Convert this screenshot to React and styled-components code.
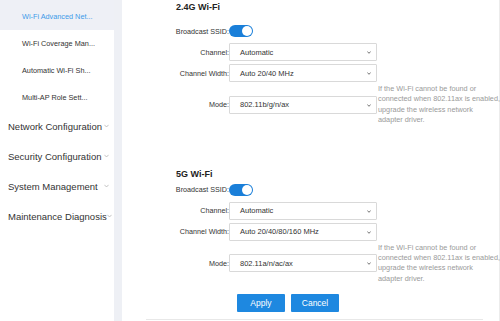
import React from 'react';
import styled, { createGlobalStyle } from 'styled-components';

const GlobalStyle = createGlobalStyle`
  html, body {
    margin: 0;
    padding: 0;
    background: #ffffff;
    font-family: "Liberation Sans", Arial, sans-serif;
    color: #333;
  }
`;

const Page = styled.div`
  display: flex;
  width: 500px;
  height: 321px;
  overflow: hidden;
`;

const Sidebar = styled.div`
  width: 114px;
  flex-shrink: 0;
  background: #fff;
`;

const Gutter = styled.div`
  width: 8px;
  flex-shrink: 0;
  background: #eef0f5;
`;

const SubItem = styled.div`
  height: ${(p) => (p.active ? '30px' : '27px')};
  padding-top: ${(p) => (p.active ? '3px' : '0')};
  box-sizing: border-box;
  display: flex;
  align-items: center;
  padding-left: 22px;
  font-size: 7.3px;
  color: ${(p) => (p.active ? '#3d9be9' : '#333')};
  background: ${(p) => (p.active ? '#eef0f6' : 'transparent')};
  white-space: nowrap;
`;

const GroupRow = styled.div`
  height: 30px;
  display: flex;
  align-items: center;
  padding-left: 8px;
  padding-right: 5px;
  font-size: 9.5px;
  color: #333;
  white-space: nowrap;
`;

const GroupLabel = styled.span`
  flex: 1;
`;

const Chevron = styled.svg`
  width: 5px;
  height: 4px;
  flex-shrink: 0;
`;

const Main = styled.div`
  flex: 1;
  border-right: 1px solid #ececec;
  padding-left: 24px;
`;

const Card = styled.div`
  width: 337px;
  padding-bottom: 7px;
  border-bottom: 1px solid #e8e8e8;
`;

const Title = styled.div`
  padding-left: 30px;
  font-size: 9px;
  font-weight: bold;
  color: #222;
  line-height: 14px;
  margin-top: ${(p) => p.top}px;
  margin-bottom: ${(p) => p.bottom}px;
`;

const Row = styled.div`
  display: grid;
  grid-template-columns: 83px 148px 130px;
  align-items: center;
  min-height: 18px;
  margin-top: ${(p) => p.top ?? 3}px;
`;

const Label = styled.div`
  text-align: right;
  font-size: 7.2px;
  color: #333;
  white-space: nowrap;
`;

const Toggle = styled.div`
  width: 24px;
  height: 12px;
  border-radius: 6px;
  background: #1a7fd9;
  position: relative;
`;

const Knob = styled.div`
  position: absolute;
  right: 1px;
  top: 1px;
  width: 10px;
  height: 10px;
  border-radius: 50%;
  background: #fff;
`;

const SelectBox = styled.div`
  position: relative;
  height: 18px;
  box-sizing: border-box;
  border: 1px solid #d9d9d9;
  border-radius: 1px;
  display: flex;
  align-items: center;
  padding-left: 10px;
  font-size: 7.5px;
  color: #333;
  background: #fff;
`;

const SelectArrow = styled.svg`
  position: absolute;
  right: 5px;
  top: 7px;
  width: 4px;
  height: 3px;
`;

const Help = styled.div`
  padding-left: 1px;
  font-size: 7.3px;
  line-height: 10.4px;
  color: #9a9a9a;
  white-space: pre-line;
`;

const Buttons = styled.div`
  display: flex;
  gap: 6px;
  padding-left: 91px;
  margin-top: 10px;
`;

const Button = styled.button`
  width: 48px;
  height: 18px;
  border: none;
  border-radius: 1px;
  background: #1e88e0;
  color: #fff;
  font-family: "Liberation Sans", Arial, sans-serif;
  font-size: 8.5px;
  padding: 0;
`;

const subItems = [
  'Wi-Fi Advanced Net...',
  'Wi-Fi Coverage Man...',
  'Automatic Wi-Fi Sh...',
  'Multi-AP Role Sett...',
];

const groups = [
  'Network Configuration',
  'Security Configuration',
  'System Management',
  'Maintenance Diagnosis',
];

const Select = ({ value }) => (
  <SelectBox>
    {value}
    <SelectArrow viewBox="0 0 4 3">
      <polyline points="0.4,0.5 2,2.3 3.6,0.5" fill="none" stroke="#555" strokeWidth="0.8" />
    </SelectArrow>
  </SelectBox>
);

const helpText =
  'If the Wi-Fi cannot be found or\nconnected when 802.11ax is enabled,\nupgrade the wireless network\nadapter driver.';

const Band = ({ title, titleTop, titleBottom, width, mode }) => (
  <>
    <Title top={titleTop} bottom={titleBottom}>{title}</Title>
    <Row top={0}>
      <Label>Broadcast SSID:</Label>
      <Toggle>
        <Knob />
      </Toggle>
    </Row>
    <Row>
      <Label>Channel:</Label>
      <Select value="Automatic" />
    </Row>
    <Row>
      <Label>Channel Width:</Label>
      <Select value={width} />
    </Row>
    <Row top={2}>
      <Label>Mode:</Label>
      <Select value={mode} />
      <Help>{helpText}</Help>
    </Row>
  </>
);

export default function App() {
  return (
    <>
      <GlobalStyle />
      <Page>
        <Sidebar>
          {subItems.map((s, i) => (
            <SubItem key={s} active={i === 0}>{s}</SubItem>
          ))}
          {groups.map((g) => (
            <GroupRow key={g}>
              <GroupLabel>{g}</GroupLabel>
              <Chevron viewBox="0 0 5 4">
                <polyline points="0.4,0.8 2.5,3 4.6,0.8" fill="none" stroke="#aaa" strokeWidth="0.7" />
              </Chevron>
            </GroupRow>
          ))}
        </Sidebar>
        <Gutter />
        <Main>
          <Card>
            <Band
              title="2.4G Wi-Fi"
              titleTop={0}
              titleBottom={8}
              width="Auto 20/40 MHz"
              mode="802.11b/g/n/ax"
            />
            <Band
              title="5G Wi-Fi"
              titleTop={41}
              titleBottom={0}
              width="Auto 20/40/80/160 MHz"
              mode="802.11a/n/ac/ax"
            />
            <Buttons>
              <Button>Apply</Button>
              <Button>Cancel</Button>
            </Buttons>
          </Card>
        </Main>
      </Page>
    </>
  );
}
